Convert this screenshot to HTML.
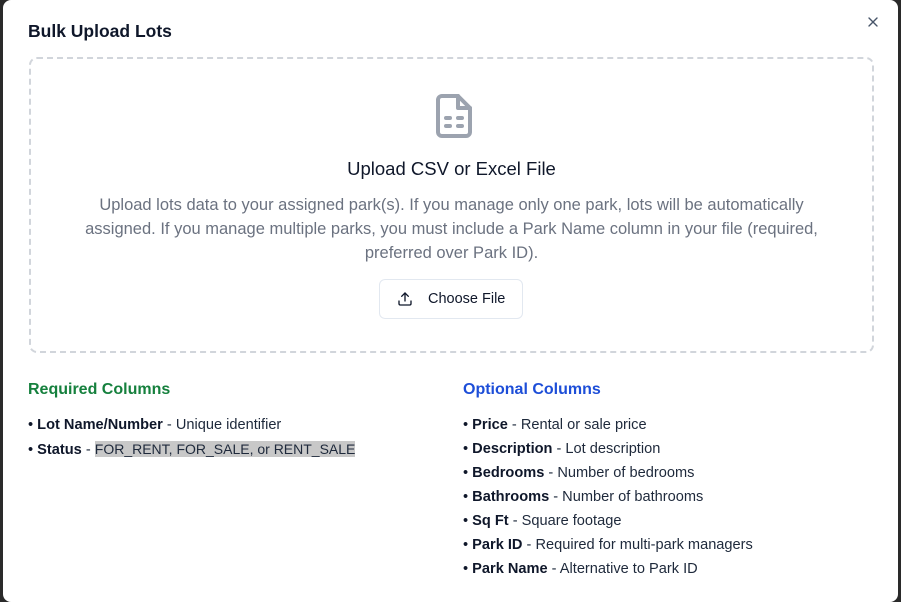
<!DOCTYPE html>
<html><head><style>
*{box-sizing:border-box;margin:0;padding:0}
body{width:901px;height:602px;background:#2a2a2a;font-family:"Liberation Sans",sans-serif;overflow:hidden;position:relative}
.m{position:absolute;left:3px;top:0;width:895px;height:602px;background:#fff;border-radius:8px}
.t{position:absolute;left:25px;top:21px;font-size:17.5px;font-weight:bold;color:#0f172a}
.x{position:absolute;left:864px;top:16px}
.d{position:absolute;left:26px;top:57px;width:845px;height:296px;border:2px dashed #d1d5db;border-radius:8px;text-align:center}
.h{position:absolute;left:0;right:0;top:99px;font-size:18.5px;color:#0f172a}
.p{position:absolute;left:40px;right:40px;top:134px;font-size:16.5px;line-height:24px;color:#6b7280}
.b{position:absolute;left:348px;top:220px;width:144px;height:40px;border:1px solid #e2e8f0;border-radius:6px;font-size:14.5px;color:#0f172a;line-height:39px;padding-left:48px;text-align:left}
.b svg{position:absolute;left:17px;top:11px}
.c{position:absolute;top:381px;font-size:16px;font-weight:bold}
ul{position:absolute;list-style:none;font-size:14.6px;color:#1e293b;line-height:24px;top:413px}
li b{color:#0f172a}
li:before{content:"• ";color:#0f172a}
.hl{background:#c8c8c8;font-size:14px}
</style></head><body>
<div class="m">
<div class="t">Bulk Upload Lots</div>
<svg class="x" width="12" height="12" viewBox="0 0 12 12" stroke="#475569" stroke-width="1.4" stroke-linecap="round"><path d="M2 2l8 8M10 2l-8 8"/></svg>
<div class="d">
<svg style="position:absolute;left:399px;top:33px" width="48" height="48" viewBox="0 0 24 24" fill="none" stroke="#9ca3af" stroke-width="2" stroke-linecap="round" stroke-linejoin="round"><path d="M14 2H6a2 2 0 0 0-2 2v16a2 2 0 0 0 2 2h12a2 2 0 0 0 2-2V8z"/><path d="M14 2v6h6"/><path d="M8 13h2M14 13h2M8 17h2M14 17h2"/></svg>
<div class="h">Upload CSV or Excel File</div>
<div class="p">Upload lots data to your assigned park(s). If you manage only one park, lots will be automatically assigned. If you manage multiple parks, you must include a Park Name column in your file (required, preferred over Park ID).</div>
<div class="b"><svg width="16" height="16" viewBox="0 0 24 24" fill="none" stroke="#0f172a" stroke-width="2" stroke-linecap="round" stroke-linejoin="round"><path d="M21 15v4a2 2 0 0 1-2 2H5a2 2 0 0 1-2-2v-4"/><path d="M17 8l-5-5-5 5"/><path d="M12 3v12"/></svg>Choose File</div>
</div>
<div class="c" style="left:25px;color:#15803d">Required Columns</div>
<ul style="left:25px"><li><b>Lot Name/Number</b> - Unique identifier</li><li><b>Status</b> - <span class="hl">FOR_RENT, FOR_SALE, or RENT_SALE</span></li></ul>
<div class="c" style="left:460px;color:#1d4ed8">Optional Columns</div>
<ul style="left:460px"><li><b>Price</b> - Rental or sale price</li><li><b>Description</b> - Lot description</li><li><b>Bedrooms</b> - Number of bedrooms</li><li><b>Bathrooms</b> - Number of bathrooms</li><li><b>Sq Ft</b> - Square footage</li><li><b>Park ID</b> - Required for multi-park managers</li><li><b>Park Name</b> - Alternative to Park ID</li></ul>
</div>
</body></html>
